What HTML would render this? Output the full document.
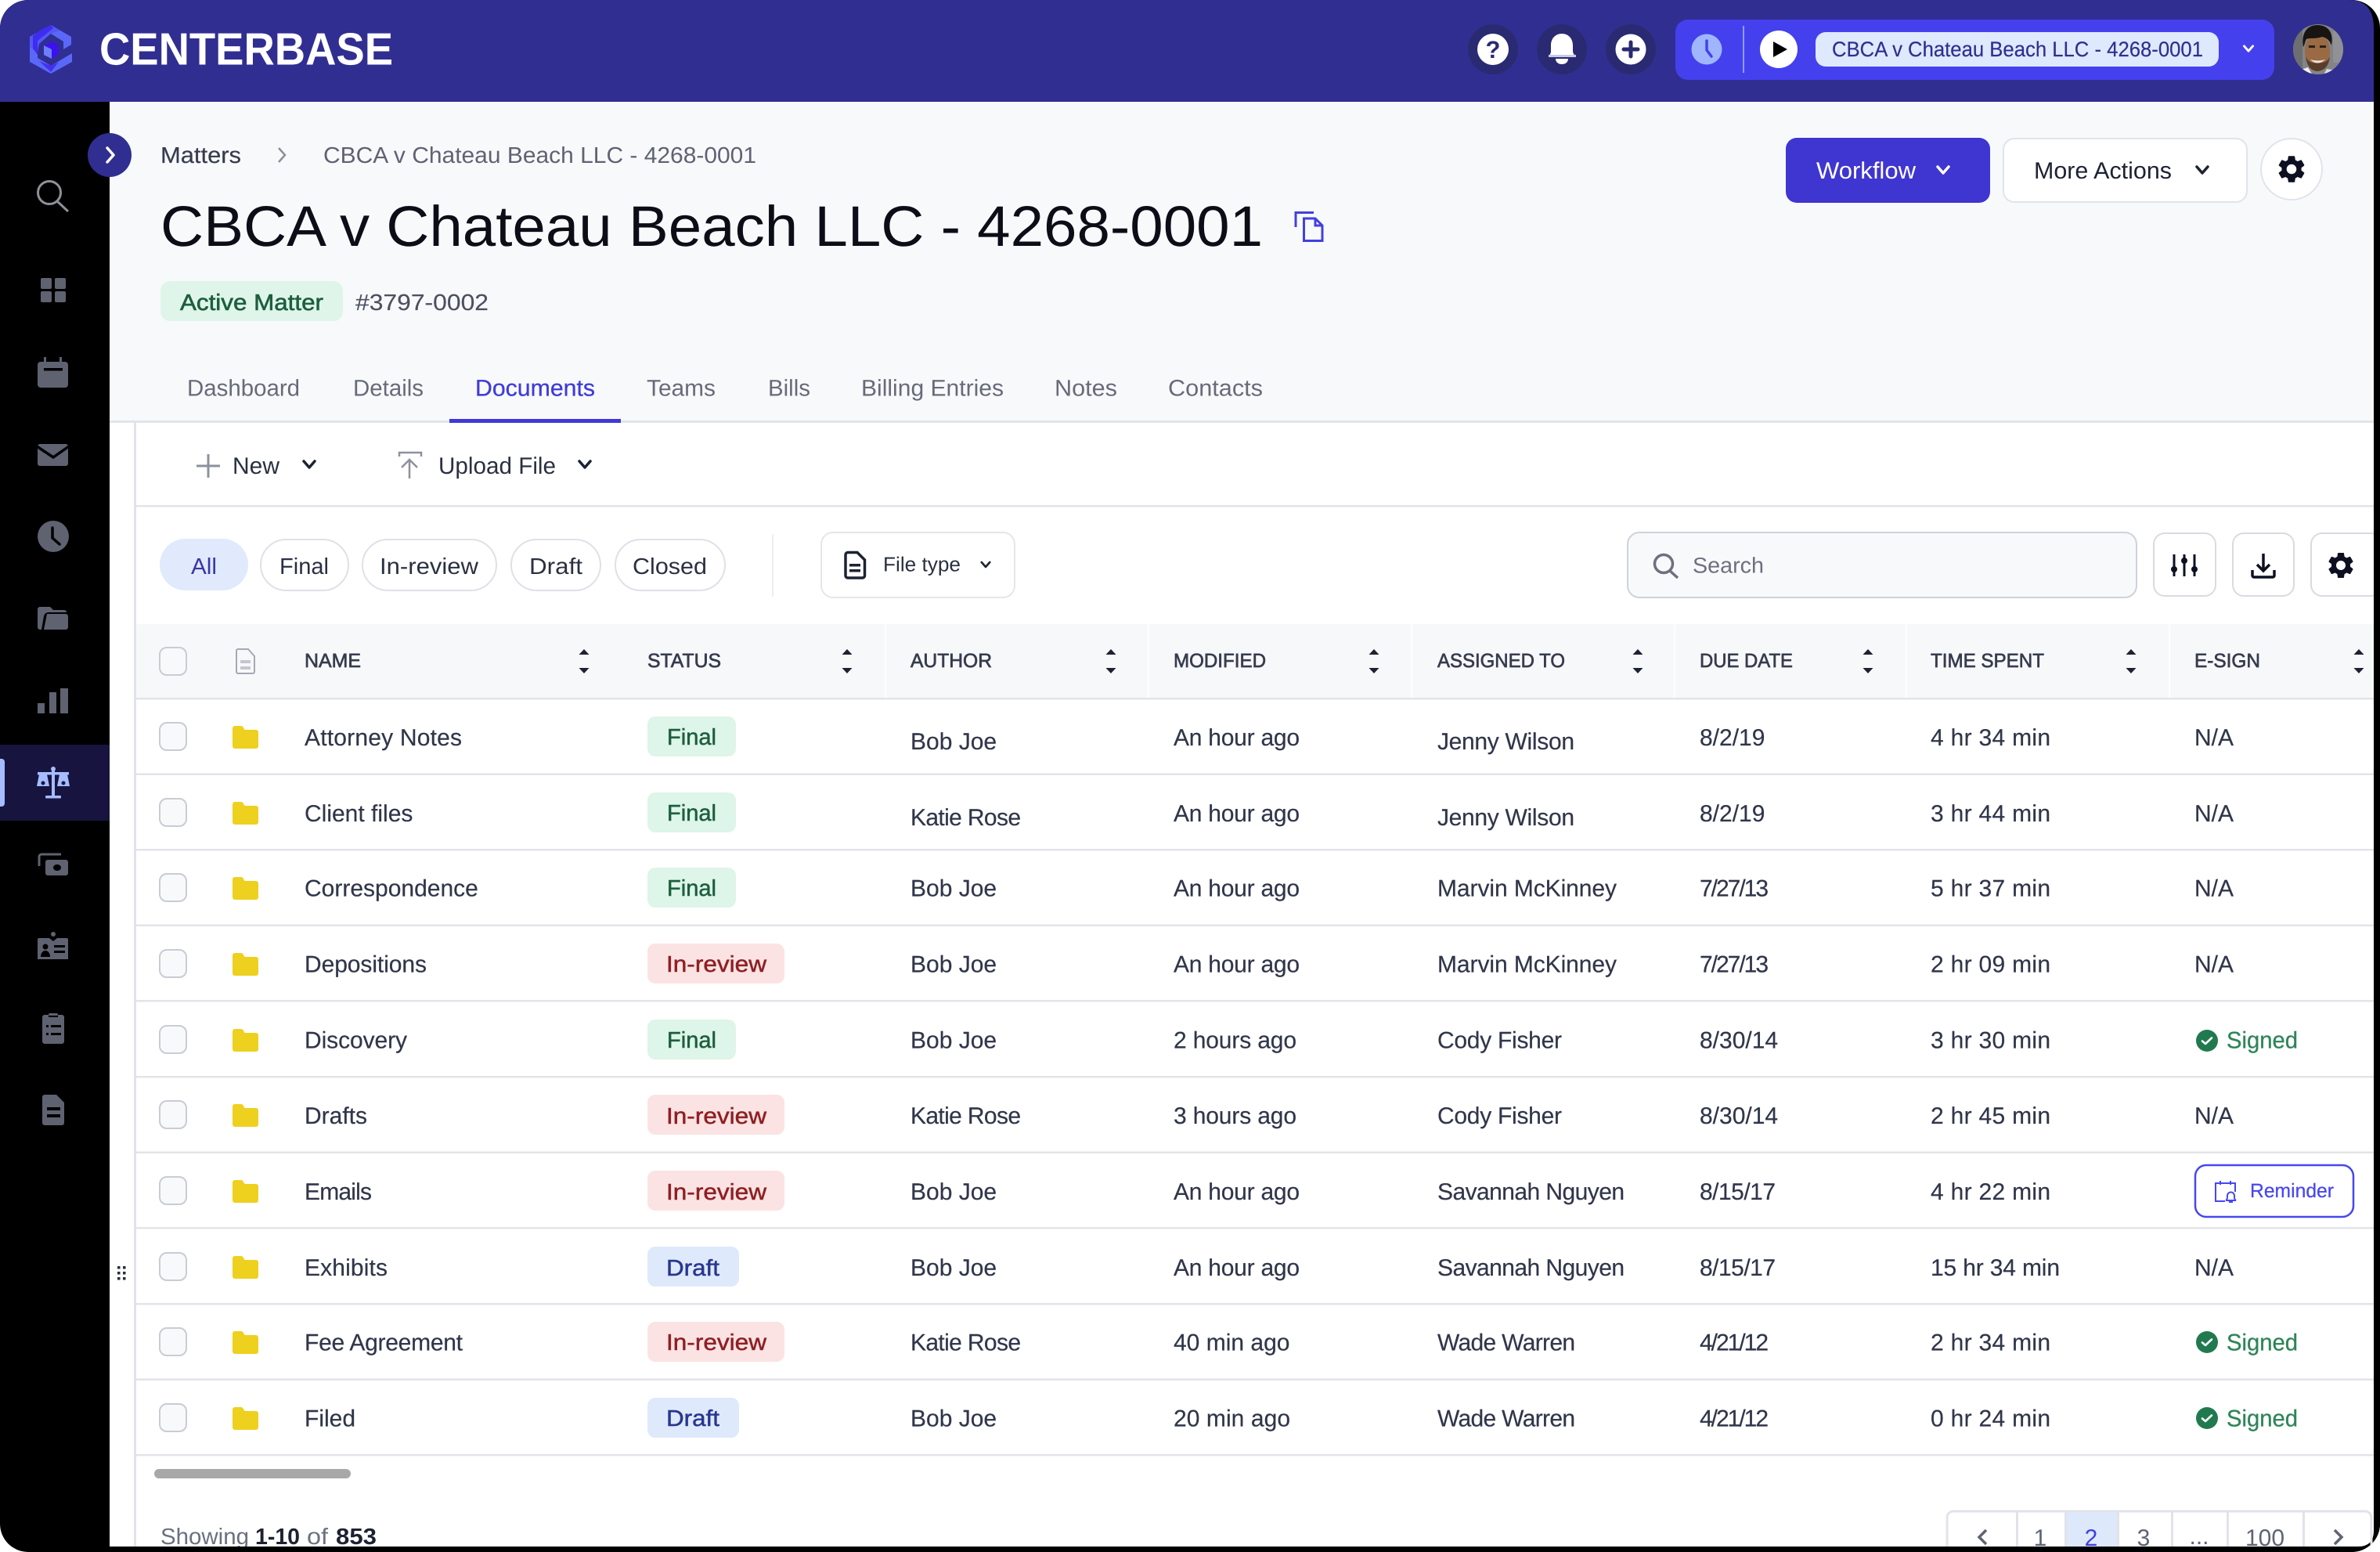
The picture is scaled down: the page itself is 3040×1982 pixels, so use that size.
<!DOCTYPE html>
<html lang="en">
<head>
<meta charset="utf-8">
<title>CBCA v Chateau Beach LLC - 4268-0001</title>
<style>
html,body{margin:0;padding:0;background:#fff;width:3040px;height:1982px;overflow:hidden}
svg{display:block}
text{font-family:"Liberation Sans",sans-serif;text-rendering:geometricPrecision;white-space:pre}
.t{font-size:30px;fill:#30364a;stroke:#30364a;stroke-width:.2px}
.th{font-size:25px;fill:#363c4e;stroke:#363c4e;stroke-width:.7px}
.bd{font-size:29px;stroke-width:.5px}
.g{fill:#1d5e3d;stroke:#1d5e3d}.r{fill:#8f1f24;stroke:#8f1f24}.b{fill:#28378f;stroke:#28378f}
.tab{font-size:29.5px;fill:#666b7a}
.sg{font-size:30px;fill:#2f8559;stroke:#2f8559;stroke-width:.3px}
.pg{font-size:30px;fill:#5f6474;text-anchor:middle}
.btn{font-size:30px;fill:#1d2233}
.ic{fill:#5f6270}
</style>
</head>
<body>
<svg width="3040" height="1982" viewBox="0 0 3040 1982" xmlns="http://www.w3.org/2000/svg">
<defs>
<clipPath id="win"><rect x="0" y="0" width="3040" height="1982" rx="36"/></clipPath>
<clipPath id="av"><circle cx="2961" cy="63" r="32"/></clipPath>
<clipPath id="content"><rect x="0" y="0" width="3032" height="1975"/></clipPath>
<path id="gear" d="M19.14 12.94c.04-.3.06-.61.06-.94 0-.32-.02-.64-.07-.94l2.03-1.58c.18-.14.23-.41.12-.61l-1.92-3.32c-.12-.22-.37-.29-.59-.22l-2.39.96c-.5-.38-1.03-.7-1.62-.94l-.36-2.54c-.04-.24-.24-.41-.48-.41h-3.84c-.24 0-.43.17-.47.41l-.36 2.54c-.59.24-1.13.57-1.62.94l-2.39-.96c-.22-.08-.47 0-.59.22L2.74 8.87c-.12.21-.08.47.12.61l2.03 1.58c-.05.3-.09.63-.09.94s.02.64.07.94l-2.03 1.58c-.18.14-.23.41-.12.61l1.92 3.32c.12.22.37.29.59.22l2.39-.96c.5.38 1.03.7 1.62.94l.36 2.54c.05.24.24.41.48.41h3.84c.24 0 .44-.17.47-.41l.36-2.54c.59-.24 1.13-.56 1.62-.94l2.39.96c.22.08.47 0 .59-.22l1.92-3.32c.12-.22.07-.47-.12-.61l-2.01-1.58zM12 15.6c-1.98 0-3.6-1.62-3.6-3.6s1.62-3.6 3.6-3.6 3.6 1.62 3.6 3.6-1.62 3.6-3.6 3.6z"/>
<g id="cb"><rect x="-17" y="-17" width="34" height="35" rx="9" fill="#f8f9fb" stroke="#c9ccd3" stroke-width="2"/></g>
<path id="fd" d="M297 -13h11a3 3 0 0 1 2.5 1.5l2 3.5h14.5a3 3 0 0 1 3 3v18a3 3 0 0 1 -3 3h-27a3 3 0 0 1 -3 -3v-23a3 3 0 0 1 3 -3z" fill="#eed01f"/>
<g id="so"><path d="M0 -15.500L6.500 -8.500H-6.500Z M0 15.500L6.500 8.500H-6.500Z" fill="#1d2233"/></g>
<path id="ch" d="M-7 -4L0 4L7 -4" fill="none" stroke-width="3.500" stroke-linecap="round" stroke-linejoin="round"/>
<g id="ok"><circle cx="0" cy="0" r="14" fill="#217a4f"/><path d="M-6 0.500L-2 4L6 -3.500" fill="none" stroke="#fff" stroke-width="2.600" stroke-linecap="round" stroke-linejoin="round"/></g>
</defs>

<g clip-path="url(#win)">
<rect width="3040" height="1982" fill="#000"/>

<!-- header -->
<path d="M0 0H3000Q3032 0 3032 36V130H0Z" fill="#312e91"/>
<!-- logo -->
<path d="M65 32L91 47V57L81 63V53L65 43L48 53V74L65 84L92 68V79L65 94L38 79V47Z" fill="#5a68f8"/>
<path d="M65 32L77 39L65 43L50 56L48 66L38 60V47Z" fill="#5258f4"/>
<path d="M52 38L65 32L68 36L48 52V70L42 62V46Z" fill="#3f2cf0"/>
<path d="M50 78L65 84L75 79L65 92Z" fill="#4330f0"/>
<path d="M56 58L66 53L75 58L66 63Z" fill="#3b12ee"/>
<path d="M66 63L75 58V69L66 75Z" fill="#3b12ee"/>
<path d="M56 58L66 63V75L56 70Z" fill="#6b80ff"/>
<text x="127" y="82.500" font-size="58" font-weight="700" fill="#fff" textLength="375" lengthAdjust="spacingAndGlyphs">CENTERBASE</text>

<circle cx="1907" cy="63" r="32" fill="#2a2a72"/>
<circle cx="1907" cy="63" r="20" fill="#fff"/>
<text x="1907" y="74" font-size="31" font-weight="700" fill="#2a2a72" text-anchor="middle">?</text>
<circle cx="1995" cy="63" r="32" fill="#2a2a72"/>
<path d="M1978 73c0-2 3-3 3-8v-7c0-9 6-15 14-15s14 6 14 15v7c0 5 4 6 4 8z" fill="#fff"/>
<rect x="1978" y="70" width="35" height="3" fill="#c9cbe4"/>
<path d="M1987 75h16c0 4-3 7-8 7s-8-3-8-7z" fill="#fff"/>
<circle cx="2083" cy="63" r="32" fill="#2a2a72"/>
<circle cx="2083" cy="63" r="19.500" fill="#fff"/>
<path d="M2083 54V72M2074 63H2092" stroke="#2a2a72" stroke-width="5" stroke-linecap="round"/>

<rect x="2140" y="25" width="765" height="77" rx="16" fill="#4540ee"/>
<circle cx="2180" cy="63" r="19.500" fill="#9fb6ff"/>
<path d="M2180 52V64L2186 72" fill="none" stroke="#4540ee" stroke-width="3.500" stroke-linecap="round" stroke-linejoin="round"/>
<rect x="2226" y="33" width="2" height="60" fill="#8d9cf8"/>
<circle cx="2272" cy="63" r="24" fill="#fff"/>
<path d="M2265 53L2283 63L2265 73Z" fill="#000"/>
<rect x="2319" y="41" width="515" height="44" rx="13" fill="#dfe9fd"/>
<text x="2340" y="72" font-size="27" fill="#312e91" stroke="#312e91" stroke-width=".2" textLength="474" lengthAdjust="spacingAndGlyphs">CBCA v Chateau Beach LLC - 4268-0001</text>
<use href="#ch" stroke="#fff" transform="translate(2872 62) scale(.8)"/>

<!-- avatar -->
<g clip-path="url(#av)">
<rect x="2925" y="27" width="72" height="72" fill="#838487"/>
<rect x="2925" y="27" width="16" height="72" fill="#6c6e71"/>
<rect x="2980" y="40" width="17" height="40" fill="#8f9195"/>
<ellipse cx="2960" cy="66" rx="16" ry="24" fill="#9a6a44"/>
<path d="M2942 60C2939 42 2947 32 2960 32C2974 32 2981 42 2978 58C2976 52 2972 48 2966 47C2958 50 2949 48 2946 50C2944 53 2944 57 2942 60Z" fill="#181412"/>
<rect x="2949" y="58" width="8" height="3" fill="#2c1f18"/>
<rect x="2963" y="58" width="8" height="3" fill="#2c1f18"/>
<path d="M2945 72Q2947 90 2960 91Q2974 90 2976 72Q2972 82 2960 80Q2949 82 2945 72Z" fill="#5a3d29"/>
<path d="M2951 76Q2960 85 2970 76Q2960 79 2951 76Z" fill="#efe4dc"/>
<path d="M2936 90L2948 86L2956 99H2936Z" fill="#f1f1f1"/>
<path d="M2985 90L2972 88L2966 99H2985Z" fill="#dcdcdc"/>
</g>

<!-- main -->
<path d="M140 130H3032V1955Q3032 1975 3012 1975H140Z" fill="#fff"/>
<rect x="140" y="130" width="2892" height="408" fill="#f8f9fb"/>
<rect x="140" y="537" width="2892" height="3" fill="#e2e4ec"/>
<rect x="171" y="540" width="3" height="1435" fill="#e2e3ea"/>
<rect x="574" y="535" width="219" height="5" fill="#4237d8"/>

<!-- sidebar -->
<rect x="0" y="951" width="140" height="97" fill="#17143f"/>
<rect x="-4" y="969" width="10" height="61" rx="4" fill="#a5bcff"/>
<g>
<circle cx="63" cy="246" r="14.500" fill="none" stroke="#8e9097" stroke-width="3"/>
<path d="M73 257L87 270" stroke="#8e9097" stroke-width="3"/>
<rect class="ic" x="52" y="355" width="14" height="14" rx="2"/><rect class="ic" x="70" y="355" width="14" height="14" rx="2"/>
<rect class="ic" x="52" y="372" width="14" height="14" rx="2"/><rect class="ic" x="70" y="372" width="14" height="14" rx="2"/>
<rect class="ic" x="48" y="462" width="39" height="33" rx="4"/><rect class="ic" x="56" y="456" width="3" height="8"/><rect class="ic" x="76" y="456" width="3" height="8"/>
<rect x="56" y="470" width="24" height="3.500" fill="#000"/>
<rect class="ic" x="48" y="567" width="39" height="28" rx="3"/>
<path d="M47 570L68 584L88 570" fill="none" stroke="#000" stroke-width="3.500"/>
<circle class="ic" cx="68" cy="685" r="20"/>
<path d="M67 674V687L76 695" fill="none" stroke="#000" stroke-width="3.500" stroke-linecap="round"/>
<path class="ic" d="M48 778a3 3 0 0 1 3-3h13l4 4h14a3 3 0 0 1 3 3H62a6 6 0 0 0-6 5l-3 17h-2a3 3 0 0 1-3-3z"/>
<path class="ic" d="M60 784H84a3 3 0 0 1 3 3v14a3 3 0 0 1-3 3H56z"/>
<rect class="ic" x="48" y="898" width="9" height="13"/><rect class="ic" x="63" y="884" width="9" height="27"/><rect class="ic" x="77" y="879" width="10" height="32"/>
<g fill="#a5bcff">
<rect x="66" y="984" width="4" height="33"/><rect x="58" y="1016" width="20" height="3.500" rx="1"/><circle cx="68" cy="982" r="3"/>
<path d="M48 986H88V989.500H48Z"/>
<path d="M50 989L55 988L60 989L63 1004H47Z"/><path d="M76 989L81 988L86 989L89 1004H73Z"/>
</g>
<circle cx="55" cy="1000" r="2.500" fill="#17143f"/><circle cx="81" cy="1000" r="2.500" fill="#17143f"/>
<path d="M50 1106V1094a3 3 0 0 1 3-3H78" fill="none" stroke="#5f6270" stroke-width="3"/>
<rect class="ic" x="58" y="1098" width="29" height="20" rx="3"/><ellipse cx="73" cy="1108" rx="5" ry="4" fill="#000"/>
<circle class="ic" cx="68" cy="1193" r="3"/>
<path class="ic" d="M48 1200a2 2 0 0 1 2-2H63L68 1202L73 1198H85a2 2 0 0 1 2 2V1225H48Z"/>
<circle cx="58" cy="1209" r="3.500" fill="#000"/><path d="M52 1222c0-5 3-8 6-8s6 3 6 8z" fill="#000"/>
<rect x="69" y="1207" width="14" height="3" fill="#000"/><rect x="69" y="1214" width="14" height="3" fill="#000"/>
<path class="ic" d="M54 1299a3 3 0 0 1 3-3h5v3h12v-3h5a3 3 0 0 1 3 3v31a3 3 0 0 1-3 3H57a3 3 0 0 1-3-3z"/>
<rect class="ic" x="62" y="1294" width="12" height="3" rx="1.500"/>
<g fill="#000"><rect x="59" y="1309" width="3" height="3"/><rect x="65" y="1309" width="13" height="3"/><rect x="59" y="1319" width="3" height="3"/><rect x="65" y="1319" width="13" height="3"/></g>
<path class="ic" d="M57 1398H72L82 1408V1434a3 3 0 0 1-3 3H57a3 3 0 0 1-3-3V1401a3 3 0 0 1 3-3z"/>
<rect x="60" y="1414" width="17" height="4" fill="#000"/><rect x="60" y="1423" width="17" height="4" fill="#000"/>
</g>
<circle cx="140" cy="198" r="28" fill="#312e91"/>
<path d="M137 189L145 198L137 207" fill="none" stroke="#fff" stroke-width="3.500" stroke-linecap="round" stroke-linejoin="round"/>

<!-- drag handle -->
<g fill="#2a2d38"><rect x="150" y="1617" width="3.500" height="3.500"/><rect x="157" y="1617" width="3.500" height="3.500"/><rect x="150" y="1624" width="3.500" height="3.500"/><rect x="157" y="1624" width="3.500" height="3.500"/><rect x="150" y="1631" width="3.500" height="3.500"/><rect x="157" y="1631" width="3.500" height="3.500"/></g>

<!-- page heading -->
<text x="205" y="208" font-size="29" fill="#363c4e" stroke="#363c4e" stroke-width=".2" textLength="103" lengthAdjust="spacingAndGlyphs">Matters</text>
<path d="M356 189L364 198L356 207" fill="none" stroke="#8b8f9b" stroke-width="2.500"/>
<text x="413" y="208" font-size="29" fill="#5e6373" textLength="553" lengthAdjust="spacingAndGlyphs">CBCA v Chateau Beach LLC - 4268-0001</text>
<text x="205" y="314" font-size="73" fill="#0b0e17" textLength="1408" lengthAdjust="spacingAndGlyphs">CBCA v Chateau Beach LLC - 4268-0001</text>
<path d="M1655 290V271.500H1678" fill="none" stroke="#4340dd" stroke-width="3"/>
<path d="M1665.500 279H1680L1689 288V307.500H1665.500Z M1680 279V288H1689" fill="none" stroke="#4340dd" stroke-width="3"/>
<rect x="205" y="359" width="233" height="51" rx="12" fill="#dff5ea"/>
<text x="230" y="396" font-size="29" class="g" stroke-width=".6" textLength="183" lengthAdjust="spacingAndGlyphs">Active Matter</text>
<text x="454" y="396" font-size="29" fill="#4b5060" stroke="#4b5060" stroke-width=".15" textLength="170" lengthAdjust="spacingAndGlyphs">#3797-0002</text>

<!-- right buttons -->
<rect x="2281" y="176" width="261" height="83" rx="14" fill="#3f35d0"/>
<text x="2320" y="228" class="btn" style="fill:#fff" textLength="127" lengthAdjust="spacingAndGlyphs">Workflow</text>
<use href="#ch" x="2482" y="217" stroke="#fff"/>
<rect x="2559" y="177" width="311" height="81" rx="14" fill="#fff" stroke="#e2e3ea" stroke-width="2"/>
<text x="2598" y="228" class="btn" textLength="176" lengthAdjust="spacingAndGlyphs">More Actions</text>
<use href="#ch" x="2813" y="217" stroke="#1d2233"/>
<circle cx="2927" cy="216" r="39" fill="#fff" stroke="#e2e3ea" stroke-width="2"/>
<g transform="translate(2906 195) scale(1.750)"><use href="#gear" fill="#0d1020"/></g>

<!-- tabs -->
<text x="239" y="505.500" class="tab" textLength="144" lengthAdjust="spacingAndGlyphs">Dashboard</text>
<text x="451" y="505.500" class="tab" textLength="90" lengthAdjust="spacingAndGlyphs">Details</text>
<text x="607" y="505.500" class="tab" style="fill:#3f3bd9;stroke:#3f3bd9;stroke-width:.3px" textLength="153" lengthAdjust="spacingAndGlyphs">Documents</text>
<text x="826" y="505.500" class="tab" textLength="88" lengthAdjust="spacingAndGlyphs">Teams</text>
<text x="981" y="505.500" class="tab" textLength="54" lengthAdjust="spacingAndGlyphs">Bills</text>
<text x="1100" y="505.500" class="tab" textLength="182" lengthAdjust="spacingAndGlyphs">Billing Entries</text>
<text x="1347" y="505.500" class="tab" textLength="80" lengthAdjust="spacingAndGlyphs">Notes</text>
<text x="1492" y="505.500" class="tab" textLength="121" lengthAdjust="spacingAndGlyphs">Contacts</text>

<!-- toolbar -->
<path d="M266 580V610M251 595H281" stroke="#8d919e" stroke-width="3"/>
<text x="297" y="605" class="btn" style="fill:#2a3042" textLength="60" lengthAdjust="spacingAndGlyphs">New</text>
<use href="#ch" x="395" y="593" stroke="#1d2233"/>
<path d="M510 583V578H538V583M523 611V587M513 597L523 587L533 597" fill="none" stroke="#8d919e" stroke-width="2.500"/>
<text x="560" y="605" class="btn" style="fill:#2a3042" textLength="150" lengthAdjust="spacingAndGlyphs">Upload File</text>
<use href="#ch" x="747" y="593" stroke="#1d2233"/>
<rect x="174" y="645" width="2858" height="2.500" fill="#e3e4ea"/>

<!-- filters -->
<rect x="204" y="688" width="113" height="66" rx="33" fill="#e0eafc"/>
<text x="244" y="733" font-size="29" fill="#3a36a6" textLength="33" lengthAdjust="spacingAndGlyphs">All</text>
<g fill="#fff" stroke="#e0e1e8" stroke-width="2">
<rect x="333" y="689" width="112" height="65" rx="32.500"/>
<rect x="463" y="689" width="171" height="65" rx="32.500"/>
<rect x="653" y="689" width="114" height="65" rx="32.500"/>
<rect x="786" y="689" width="140" height="65" rx="32.500"/>
</g>
<g font-size="29" fill="#2a3042">
<text x="357" y="733" textLength="63" lengthAdjust="spacingAndGlyphs">Final</text>
<text x="485" y="733" textLength="126" lengthAdjust="spacingAndGlyphs">In-review</text>
<text x="676" y="733" textLength="68" lengthAdjust="spacingAndGlyphs">Draft</text>
<text x="808" y="733" textLength="95" lengthAdjust="spacingAndGlyphs">Closed</text>
</g>
<rect x="986" y="682" width="2" height="80" fill="#eceef2"/>
<rect x="1049" y="680" width="247" height="83" rx="15" fill="#fff" stroke="#e5e6ec" stroke-width="2"/>
<path d="M1083 705.500H1095L1104.500 715V735a3 3 0 0 1-3 3H1083a3 3 0 0 1-3-3V708.500a3 3 0 0 1 3-3Z" fill="none" stroke="#1d2233" stroke-width="3.500"/>
<rect x="1085" y="720" width="14" height="3.500" fill="#1d2233"/><rect x="1085" y="727" width="14" height="3.500" fill="#1d2233"/>
<text x="1128" y="729.500" font-size="26" fill="#2a3042" textLength="99" lengthAdjust="spacingAndGlyphs">File type</text>
<use href="#ch" transform="translate(1259 721) scale(.75)" stroke="#1d2233"/>

<rect x="2079" y="680" width="650" height="83" rx="15" fill="#f8f9fb" stroke="#cfd2d9" stroke-width="2"/>
<circle cx="2125" cy="720" r="11.500" fill="none" stroke="#6c7180" stroke-width="3.500"/>
<path d="M2133 729L2143 738" stroke="#6c7180" stroke-width="3.500"/>
<text x="2162" y="731.500" font-size="28" fill="#6c7180" textLength="91" lengthAdjust="spacingAndGlyphs">Search</text>
<g fill="#fff" stroke="#d9dbe2" stroke-width="2">
<rect x="2751" y="681" width="79" height="80" rx="14"/>
<rect x="2852" y="681" width="78" height="80" rx="14"/>
<rect x="2952" y="681" width="90" height="80" rx="14"/>
</g>
<g stroke="#0d1020" stroke-width="3" fill="#0d1020">
<path d="M2777 708V736M2790 708V736M2803 708V736" />
<circle cx="2777" cy="727" r="2.500"/><circle cx="2790" cy="716" r="2.500"/><circle cx="2803" cy="727" r="2.500"/>
</g>
<path d="M2891 707V728M2883 721L2891 729L2899 721" fill="none" stroke="#0d1020" stroke-width="3.500"/>
<path d="M2877 728V735a2 2 0 0 0 2 2H2903a2 2 0 0 0 2-2V728" fill="none" stroke="#0d1020" stroke-width="3.500"/>
<g transform="translate(2970 702) scale(1.667)"><use href="#gear" fill="#0d1020"/></g>

<!-- table head -->
<rect x="174" y="797" width="2858" height="95" fill="#f7f8fa"/>
<g fill="#fff"><rect x="1130" y="797" width="2" height="95"/><rect x="1466" y="797" width="2" height="95"/><rect x="1802" y="797" width="2" height="95"/><rect x="2138" y="797" width="2" height="95"/><rect x="2434" y="797" width="2" height="95"/><rect x="2770" y="797" width="2" height="95"/></g>
<use href="#cb" x="221" y="844"/>
<path d="M304 829H317L325 838V858a2 2 0 0 1-2 2H304a2 2 0 0 1-2-2V831a2 2 0 0 1 2-2Z" fill="none" stroke="#a5a9b3" stroke-width="2"/>
<rect x="307" y="843" width="13" height="4" fill="#c4c7cf"/><rect x="307" y="851" width="13" height="4" fill="#c4c7cf"/>
<text x="389" y="852" class="th" textLength="72" lengthAdjust="spacingAndGlyphs">NAME</text>
<text x="827" y="852" class="th" textLength="94" lengthAdjust="spacingAndGlyphs">STATUS</text>
<text x="1163" y="852" class="th" textLength="104" lengthAdjust="spacingAndGlyphs">AUTHOR</text>
<text x="1499" y="852" class="th" textLength="118" lengthAdjust="spacingAndGlyphs">MODIFIED</text>
<text x="1836" y="852" class="th" textLength="163" lengthAdjust="spacingAndGlyphs">ASSIGNED TO</text>
<text x="2171" y="852" class="th" textLength="119" lengthAdjust="spacingAndGlyphs">DUE DATE</text>
<text x="2466" y="852" class="th" textLength="145" lengthAdjust="spacingAndGlyphs">TIME SPENT</text>
<text x="2803" y="852" class="th" textLength="84" lengthAdjust="spacingAndGlyphs">E-SIGN</text>
<use href="#so" x="746" y="844.500"/><use href="#so" x="1082" y="844.500"/><use href="#so" x="1419" y="844.500"/><use href="#so" x="1755" y="844.500"/><use href="#so" x="2092" y="844.500"/><use href="#so" x="2386" y="844.500"/><use href="#so" x="2722" y="844.500"/><use href="#so" x="3013" y="844.500"/>

<!-- row lines -->
<g fill="#e3e4ea">
<rect x="174" y="891" width="2858" height="2.500"/><rect x="174" y="987.500" width="2858" height="2.500"/><rect x="174" y="1084" width="2858" height="2.500"/><rect x="174" y="1180.500" width="2858" height="2.500"/><rect x="174" y="1277" width="2858" height="2.500"/><rect x="174" y="1374" width="2858" height="2.500"/><rect x="174" y="1470.500" width="2858" height="2.500"/><rect x="174" y="1567" width="2858" height="2.500"/><rect x="174" y="1664" width="2858" height="2.500"/><rect x="174" y="1760.500" width="2858" height="2.500"/><rect x="174" y="1857" width="2858" height="2.500"/>
</g>

<!-- rows -->
<!-- 1 -->
<use href="#cb" x="221" y="940"/><use href="#fd" y="940"/>
<text x="389" y="952" class="t" textLength="201">Attorney Notes</text>
<rect x="827" y="915" width="113" height="51" rx="10" fill="#def5e9"/><text x="852" y="951" class="bd g" textLength="63" lengthAdjust="spacingAndGlyphs">Final</text>
<text x="1163" y="957" class="t">Bob Joe</text><text x="1499" y="952" class="t" textLength="161">An hour ago</text><text x="1836" y="957" class="t" textLength="175">Jenny Wilson</text><text x="2171" y="952" class="t">8/2/19</text><text x="2466" y="952" class="t" textLength="153">4 hr 34 min</text><text x="2803" y="952" class="t">N/A</text>
<!-- 2 -->
<use href="#cb" x="221" y="1037"/><use href="#fd" y="1037"/>
<text x="389" y="1049" class="t">Client files</text>
<rect x="827" y="1012" width="113" height="51" rx="10" fill="#def5e9"/><text x="852" y="1048" class="bd g" textLength="63" lengthAdjust="spacingAndGlyphs">Final</text>
<text x="1163" y="1054" class="t" textLength="141">Katie Rose</text><text x="1499" y="1049" class="t" textLength="161">An hour ago</text><text x="1836" y="1054" class="t" textLength="175">Jenny Wilson</text><text x="2171" y="1049" class="t">8/2/19</text><text x="2466" y="1049" class="t" textLength="153">3 hr 44 min</text><text x="2803" y="1049" class="t">N/A</text>
<!-- 3 -->
<use href="#cb" x="221" y="1133"/><use href="#fd" y="1133"/>
<text x="389" y="1144.500" class="t">Correspondence</text>
<rect x="827" y="1108" width="113" height="51" rx="10" fill="#def5e9"/><text x="852" y="1144" class="bd g" textLength="63" lengthAdjust="spacingAndGlyphs">Final</text>
<text x="1163" y="1144.500" class="t">Bob Joe</text><text x="1499" y="1144.500" class="t" textLength="161">An hour ago</text><text x="1836" y="1144.500" class="t" textLength="229">Marvin McKinney</text><text x="2171" y="1144.500" class="t" textLength="88">7/27/13</text><text x="2466" y="1144.500" class="t" textLength="153">5 hr 37 min</text><text x="2803" y="1144.500" class="t">N/A</text>
<!-- 4 -->
<use href="#cb" x="221" y="1230"/><use href="#fd" y="1230"/>
<text x="389" y="1241.500" class="t" textLength="156">Depositions</text>
<rect x="827" y="1205" width="175" height="51" rx="10" fill="#fbe3e3"/><text x="851" y="1241" class="bd r" textLength="128" lengthAdjust="spacingAndGlyphs">In-review</text>
<text x="1163" y="1241.500" class="t">Bob Joe</text><text x="1499" y="1241.500" class="t" textLength="161">An hour ago</text><text x="1836" y="1241.500" class="t" textLength="229">Marvin McKinney</text><text x="2171" y="1241.500" class="t" textLength="88">7/27/13</text><text x="2466" y="1241.500" class="t" textLength="153">2 hr 09 min</text><text x="2803" y="1241.500" class="t">N/A</text>
<!-- 5 -->
<use href="#cb" x="221" y="1327"/><use href="#fd" y="1327"/>
<text x="389" y="1338.500" class="t" textLength="131">Discovery</text>
<rect x="827" y="1302" width="113" height="51" rx="10" fill="#def5e9"/><text x="852" y="1338" class="bd g" textLength="63" lengthAdjust="spacingAndGlyphs">Final</text>
<text x="1163" y="1338.500" class="t">Bob Joe</text><text x="1499" y="1338.500" class="t" textLength="157">2 hours ago</text><text x="1836" y="1338.500" class="t" textLength="159">Cody Fisher</text><text x="2171" y="1338.500" class="t">8/30/14</text><text x="2466" y="1338.500" class="t" textLength="153">3 hr 30 min</text><use href="#ok" x="2819" y="1329"/><text x="2844" y="1338.500" class="sg" textLength="91" lengthAdjust="spacingAndGlyphs">Signed</text>
<!-- 6 -->
<use href="#cb" x="221" y="1423"/><use href="#fd" y="1423"/>
<text x="389" y="1435" class="t">Drafts</text>
<rect x="827" y="1398" width="175" height="51" rx="10" fill="#fbe3e3"/><text x="851" y="1435" class="bd r" textLength="128" lengthAdjust="spacingAndGlyphs">In-review</text>
<text x="1163" y="1435" class="t" textLength="141">Katie Rose</text><text x="1499" y="1435" class="t" textLength="157">3 hours ago</text><text x="1836" y="1435" class="t" textLength="159">Cody Fisher</text><text x="2171" y="1435" class="t">8/30/14</text><text x="2466" y="1435" class="t" textLength="153">2 hr 45 min</text><text x="2803" y="1435" class="t">N/A</text>
<!-- 7 -->
<use href="#cb" x="221" y="1520"/><use href="#fd" y="1520"/>
<text x="389" y="1532" class="t" textLength="86">Emails</text>
<rect x="827" y="1495" width="175" height="51" rx="10" fill="#fbe3e3"/><text x="851" y="1532" class="bd r" textLength="128" lengthAdjust="spacingAndGlyphs">In-review</text>
<text x="1163" y="1532" class="t">Bob Joe</text><text x="1499" y="1532" class="t" textLength="161">An hour ago</text><text x="1836" y="1532" class="t" textLength="239">Savannah Nguyen</text><text x="2171" y="1532" class="t" textLength="97">8/15/17</text><text x="2466" y="1532" class="t" textLength="153">4 hr 22 min</text>
<rect x="2804" y="1488" width="202" height="66" rx="14" fill="#fff" stroke="#4747ef" stroke-width="2.500"/>
<path d="M2836 1511H2830V1534H2842M2849 1511H2855V1522M2836 1508V1513M2849 1508V1513M2836 1511H2849" fill="none" stroke="#4747ef" stroke-width="2"/>
<path d="M2843 1533c2-1 2-3 2-6a4.500 4.500 0 0 1 9 0c0 3 0 5 2 6z M2847 1535h5" fill="#fff" stroke="#4747ef" stroke-width="2"/>
<text x="2874" y="1529" font-size="25" fill="#4747ef" stroke="#4747ef" stroke-width=".25" textLength="107" lengthAdjust="spacingAndGlyphs">Reminder</text>
<!-- 8 -->
<use href="#cb" x="221" y="1617"/><use href="#fd" y="1617"/>
<text x="389" y="1629" class="t" textLength="106">Exhibits</text>
<rect x="827" y="1592" width="117" height="51" rx="10" fill="#dfe9fc"/><text x="851" y="1629" class="bd b" textLength="68" lengthAdjust="spacingAndGlyphs">Draft</text>
<text x="1163" y="1629" class="t">Bob Joe</text><text x="1499" y="1629" class="t" textLength="161">An hour ago</text><text x="1836" y="1629" class="t" textLength="239">Savannah Nguyen</text><text x="2171" y="1629" class="t" textLength="97">8/15/17</text><text x="2466" y="1629" class="t" textLength="165">15 hr 34 min</text><text x="2803" y="1629" class="t">N/A</text>
<!-- 9 -->
<use href="#cb" x="221" y="1713"/><use href="#fd" y="1713"/>
<text x="389" y="1724.500" class="t" textLength="202">Fee Agreement</text>
<rect x="827" y="1688" width="175" height="51" rx="10" fill="#fbe3e3"/><text x="851" y="1724" class="bd r" textLength="128" lengthAdjust="spacingAndGlyphs">In-review</text>
<text x="1163" y="1724.500" class="t" textLength="141">Katie Rose</text><text x="1499" y="1724.500" class="t">40 min ago</text><text x="1836" y="1724.500" class="t" textLength="176">Wade Warren</text><text x="2171" y="1724.500" class="t" textLength="88">4/21/12</text><text x="2466" y="1724.500" class="t" textLength="153">2 hr 34 min</text><use href="#ok" x="2819" y="1714"/><text x="2844" y="1724.500" class="sg" textLength="91" lengthAdjust="spacingAndGlyphs">Signed</text>
<!-- 10 -->
<use href="#cb" x="221" y="1810"/><use href="#fd" y="1810"/>
<text x="389" y="1821.500" class="t">Filed</text>
<rect x="827" y="1785" width="117" height="51" rx="10" fill="#dfe9fc"/><text x="851" y="1821" class="bd b" textLength="68" lengthAdjust="spacingAndGlyphs">Draft</text>
<text x="1163" y="1821.500" class="t">Bob Joe</text><text x="1499" y="1821.500" class="t" textLength="149">20 min ago</text><text x="1836" y="1821.500" class="t" textLength="176">Wade Warren</text><text x="2171" y="1821.500" class="t" textLength="88">4/21/12</text><text x="2466" y="1821.500" class="t" textLength="153">0 hr 24 min</text><use href="#ok" x="2819" y="1811"/><text x="2844" y="1821.500" class="sg" textLength="91" lengthAdjust="spacingAndGlyphs">Signed</text>

<!-- scrollbar -->
<rect x="197" y="1876" width="251" height="12" rx="6" fill="#a8a8a8"/>

<!-- footer -->
<g clip-path="url(#content)">
<text x="205" y="1972" font-size="29" fill="#6b7080" textLength="113" lengthAdjust="spacingAndGlyphs">Showing</text>
<text x="326" y="1972" font-size="29" font-weight="700" fill="#1d2233" textLength="57" lengthAdjust="spacingAndGlyphs">1-10</text>
<text x="392" y="1972" font-size="29" fill="#6b7080" textLength="27" lengthAdjust="spacingAndGlyphs">of</text>
<text x="429" y="1972" font-size="29" font-weight="700" fill="#1d2233" textLength="52" lengthAdjust="spacingAndGlyphs">853</text>

<rect x="2638" y="1930" width="67" height="46" fill="#dee8fb"/>
<path d="M2487 1976V1938a8 8 0 0 1 8-8H3021a8 8 0 0 1 8 8V1976" fill="none" stroke="#e2e3ea" stroke-width="3"/>
<g fill="#e2e3ea"><rect x="2575" y="1930" width="3" height="46"/><rect x="2637" y="1930" width="3" height="46"/><rect x="2704" y="1930" width="3" height="46"/><rect x="2773" y="1930" width="3" height="46"/><rect x="2844" y="1930" width="3" height="46"/><rect x="2941" y="1930" width="3" height="46"/></g>
<path d="M2537 1954L2528 1963L2537 1972" fill="none" stroke="#5f6474" stroke-width="3.500"/>
<text x="2606" y="1974" class="pg">1</text>
<text x="2671" y="1974" class="pg" style="fill:#4040e0">2</text>
<text x="2738" y="1974" class="pg">3</text>
<text x="2809" y="1972" class="pg">...</text>
<text x="2893" y="1974" class="pg" textLength="50">100</text>
<path d="M2982 1954L2991 1963L2982 1972" fill="none" stroke="#5f6474" stroke-width="3.500"/>
</g>

<!-- bottom and right frame cover -->
<rect x="3032" y="130" width="8" height="1852" fill="#000"/>
<rect x="140" y="1976" width="2900" height="6" fill="#000"/>
</g>
</svg>
</body>
</html>
